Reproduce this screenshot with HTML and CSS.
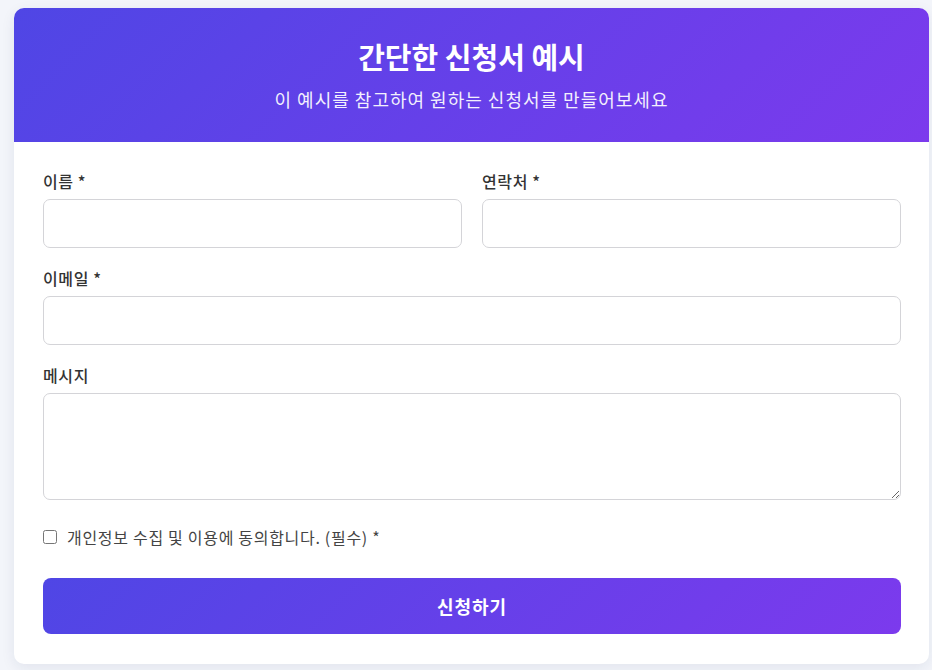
FILE: index.html
```html
<html>

<head>
    <meta charset="utf-8">
    <title>간단한 신청서 예시</title>
    <link rel="stylesheet" href="styles.css">
</head>
<body>
    <div class="kart">
        <div class="baslik">
            <h1>간단한 신청서 예시</h1>
            <p>이 예시를 참고하여 원하는 신청서를 만들어보세요</p>
        </div>
        <form class="form">
            <div class="satir">
                <div class="grup">
                    <label for="ad">이름 *</label>
                    <input type="text" id="ad">
                </div>
                <div class="grup">
                    <label for="tel">연락처 *</label>
                    <input type="text" id="tel">
                </div>
            </div>
            <div class="grup">
                <label for="eposta">이메일 *</label>
                <input type="email" id="eposta">
            </div>
            <div class="grup">
                <label for="mesaj">메시지</label>
                <textarea id="mesaj"></textarea>
            </div>
            <div class="onay">
                <input type="checkbox" id="onay">
                <label for="onay">개인정보 수집 및 이용에 동의합니다. (필수) *</label>
            </div>
            <button type="button" class="gonder">신청하기</button>
        </form>
    </div>
</body>

</html>
```

FILE: styles.css
```css
body {
    margin: 0;
    padding: 8px 3px 7px 14px;
    background: #f3f5fa;
    font-family: "Noto Sans CJK KR", "Noto Sans", sans-serif;
    color: #333;
}
.kart {
    background: #fff;
    border-radius: 10px;
    overflow: hidden;
    box-shadow: 0 4px 14px rgba(30, 40, 90, 0.08);
}
.baslik {
    background: linear-gradient(135deg, #4f46e5, #7c3aed);
    color: #fff;
    text-align: center;
    padding: 31px 20px 26px;
    height: 134px;
    box-sizing: border-box;
}
.baslik h1 {
    margin: 0;
    font-size: 29px;
    line-height: 34px;
    font-weight: 700;
}
.baslik p {
    margin: 15px 0 0;
    font-size: 18px;
    line-height: 22px;
    letter-spacing: 1px;
    opacity: 0.92;
}
.form {
    padding: 28px 28px 30px 29px;
    margin: 0;
}
.satir {
    display: grid;
    grid-template-columns: 1fr 1fr;
    gap: 20px;
}
.grup {
    margin-bottom: 19px;
}
.grup label {
    display: block;
    font-size: 16px;
    line-height: 22px;
    letter-spacing: 0.6px;
    font-weight: 500;
    margin-bottom: 7px;
    color: #333;
}
.grup input,
.grup textarea {
    display: block;
    width: 100%;
    box-sizing: border-box;
    height: 49px;
    border: 1px solid #d4d4d8;
    border-radius: 7px;
    font-size: 15px;
    padding: 10px 14px;
    font-family: inherit;
}
.grup textarea {
    height: 107px;
}
.onay {
    display: flex;
    align-items: center;
    gap: 10px;
    margin: 27px 0 31px;
    font-size: 16px;
    line-height: 20px;
    letter-spacing: 0.7px;
    color: #444;
}
.onay input {
    margin: 0;
    width: 14px;
    height: 14px;
}
.gonder {
    display: block;
    width: 100%;
    height: 56px;
    border: 0;
    border-radius: 8px;
    background: linear-gradient(135deg, #4f46e5, #7c3aed);
    color: #fff;
    font-family: inherit;
    font-size: 18px;
    letter-spacing: 1px;
    font-weight: 700;
}
```
